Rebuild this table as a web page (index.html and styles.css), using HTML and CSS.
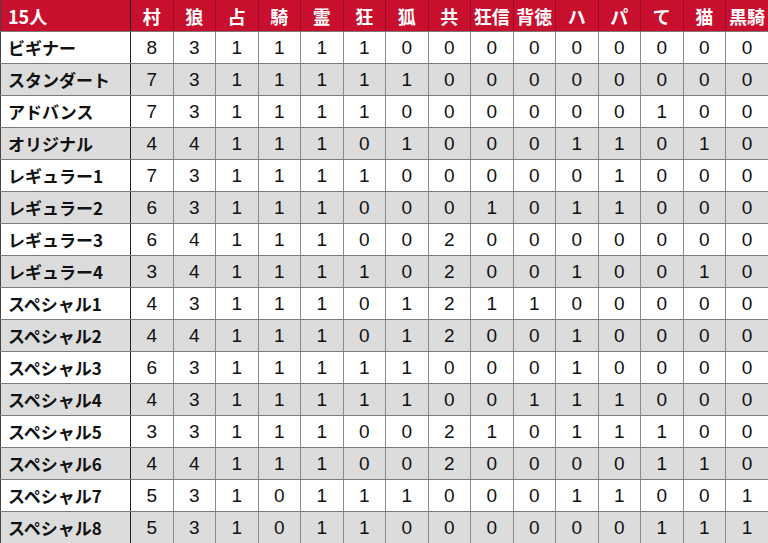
FILE: index.html
```html
<!DOCTYPE html>
<html lang="ja">
<head>
<meta charset="utf-8">
<link rel="stylesheet" href="styles.css">
</head>
<body>
<table class="grid">
<colgroup><col class="c-name"><col span="15"></colgroup>
<thead>
<tr><th class="name">15人</th><th>村</th><th>狼</th><th>占</th><th>騎</th><th>霊</th><th>狂</th><th>狐</th><th>共</th><th>狂信</th><th>背徳</th><th>ハ</th><th>パ</th><th>て</th><th>猫</th><th>黒騎</th></tr>
</thead>
<tbody>
<tr><th class="name">ビギナー</th><td>8</td><td>3</td><td>1</td><td>1</td><td>1</td><td>1</td><td>0</td><td>0</td><td>0</td><td>0</td><td>0</td><td>0</td><td>0</td><td>0</td><td>0</td></tr>
<tr><th class="name">スタンダート</th><td>7</td><td>3</td><td>1</td><td>1</td><td>1</td><td>1</td><td>1</td><td>0</td><td>0</td><td>0</td><td>0</td><td>0</td><td>0</td><td>0</td><td>0</td></tr>
<tr><th class="name">アドバンス</th><td>7</td><td>3</td><td>1</td><td>1</td><td>1</td><td>1</td><td>0</td><td>0</td><td>0</td><td>0</td><td>0</td><td>0</td><td>1</td><td>0</td><td>0</td></tr>
<tr><th class="name">オリジナル</th><td>4</td><td>4</td><td>1</td><td>1</td><td>1</td><td>0</td><td>1</td><td>0</td><td>0</td><td>0</td><td>1</td><td>1</td><td>0</td><td>1</td><td>0</td></tr>
<tr><th class="name">レギュラー1</th><td>7</td><td>3</td><td>1</td><td>1</td><td>1</td><td>1</td><td>0</td><td>0</td><td>0</td><td>0</td><td>0</td><td>1</td><td>0</td><td>0</td><td>0</td></tr>
<tr><th class="name">レギュラー2</th><td>6</td><td>3</td><td>1</td><td>1</td><td>1</td><td>0</td><td>0</td><td>0</td><td>1</td><td>0</td><td>1</td><td>1</td><td>0</td><td>0</td><td>0</td></tr>
<tr><th class="name">レギュラー3</th><td>6</td><td>4</td><td>1</td><td>1</td><td>1</td><td>0</td><td>0</td><td>2</td><td>0</td><td>0</td><td>0</td><td>0</td><td>0</td><td>0</td><td>0</td></tr>
<tr><th class="name">レギュラー4</th><td>3</td><td>4</td><td>1</td><td>1</td><td>1</td><td>1</td><td>0</td><td>2</td><td>0</td><td>0</td><td>1</td><td>0</td><td>0</td><td>1</td><td>0</td></tr>
<tr><th class="name">スペシャル1</th><td>4</td><td>3</td><td>1</td><td>1</td><td>1</td><td>0</td><td>1</td><td>2</td><td>1</td><td>1</td><td>0</td><td>0</td><td>0</td><td>0</td><td>0</td></tr>
<tr><th class="name">スペシャル2</th><td>4</td><td>4</td><td>1</td><td>1</td><td>1</td><td>0</td><td>1</td><td>2</td><td>0</td><td>0</td><td>1</td><td>0</td><td>0</td><td>0</td><td>0</td></tr>
<tr><th class="name">スペシャル3</th><td>6</td><td>3</td><td>1</td><td>1</td><td>1</td><td>1</td><td>1</td><td>0</td><td>0</td><td>0</td><td>1</td><td>0</td><td>0</td><td>0</td><td>0</td></tr>
<tr><th class="name">スペシャル4</th><td>4</td><td>3</td><td>1</td><td>1</td><td>1</td><td>1</td><td>1</td><td>0</td><td>0</td><td>1</td><td>1</td><td>1</td><td>0</td><td>0</td><td>0</td></tr>
<tr><th class="name">スペシャル5</th><td>3</td><td>3</td><td>1</td><td>1</td><td>1</td><td>0</td><td>0</td><td>2</td><td>1</td><td>0</td><td>1</td><td>1</td><td>1</td><td>0</td><td>0</td></tr>
<tr><th class="name">スペシャル6</th><td>4</td><td>4</td><td>1</td><td>1</td><td>1</td><td>0</td><td>0</td><td>2</td><td>0</td><td>0</td><td>0</td><td>0</td><td>1</td><td>1</td><td>0</td></tr>
<tr><th class="name">スペシャル7</th><td>5</td><td>3</td><td>1</td><td>0</td><td>1</td><td>1</td><td>1</td><td>0</td><td>0</td><td>0</td><td>1</td><td>1</td><td>0</td><td>0</td><td>1</td></tr>
<tr><th class="name">スペシャル8</th><td>5</td><td>3</td><td>1</td><td>0</td><td>1</td><td>1</td><td>0</td><td>0</td><td>0</td><td>0</td><td>0</td><td>0</td><td>1</td><td>1</td><td>1</td></tr>
</tbody>
</table>
</body>
</html>
```

FILE: styles.css
```css
html, body {
  margin: 0;
  padding: 0;
  background: #ffffff;
}

.grid {
  width: 768px;
  height: 543px;
  border-collapse: collapse;
  table-layout: fixed;
  font-family: "Liberation Sans", "Noto Sans CJK JP", sans-serif;
}

.c-name {
  width: 130px;
}

.grid th,
.grid td {
  padding: 0;
  height: 31px;
  text-align: center;
  vertical-align: middle;
  line-height: 1;
}

.grid thead th {
  background: #c8102e;
  color: #ffffff;
  font-family: "Noto Sans CJK JP", sans-serif;
  font-weight: 700;
  font-size: 18px;
  border-right: 1px solid #9a0b22;
  border-bottom: 1px solid #7a7a7a;
  letter-spacing: 0;
}

.grid thead th:last-child {
  border-right: none;
}

.grid th.name {
  text-align: left;
  padding-left: 7px;
  border-left: 1px solid #444444;
  border-right: 1px solid #222222;
}

.grid tbody th.name {
  font-family: "Noto Sans CJK JP", sans-serif;
  font-weight: 700;
  font-size: 17px;
  color: #111111;
}

.grid tbody td {
  font-size: 19px;
  color: #111111;
  border-left: 1px solid #8a8a8a;
  border-bottom: 1px solid #7a7a7a;
}

.grid tbody th {
  border-bottom: 1px solid #7a7a7a;
}

.grid tbody tr:nth-child(even) {
  background: #dcdcdc;
}

.grid tbody tr:nth-child(odd) {
  background: #ffffff;
}
```
